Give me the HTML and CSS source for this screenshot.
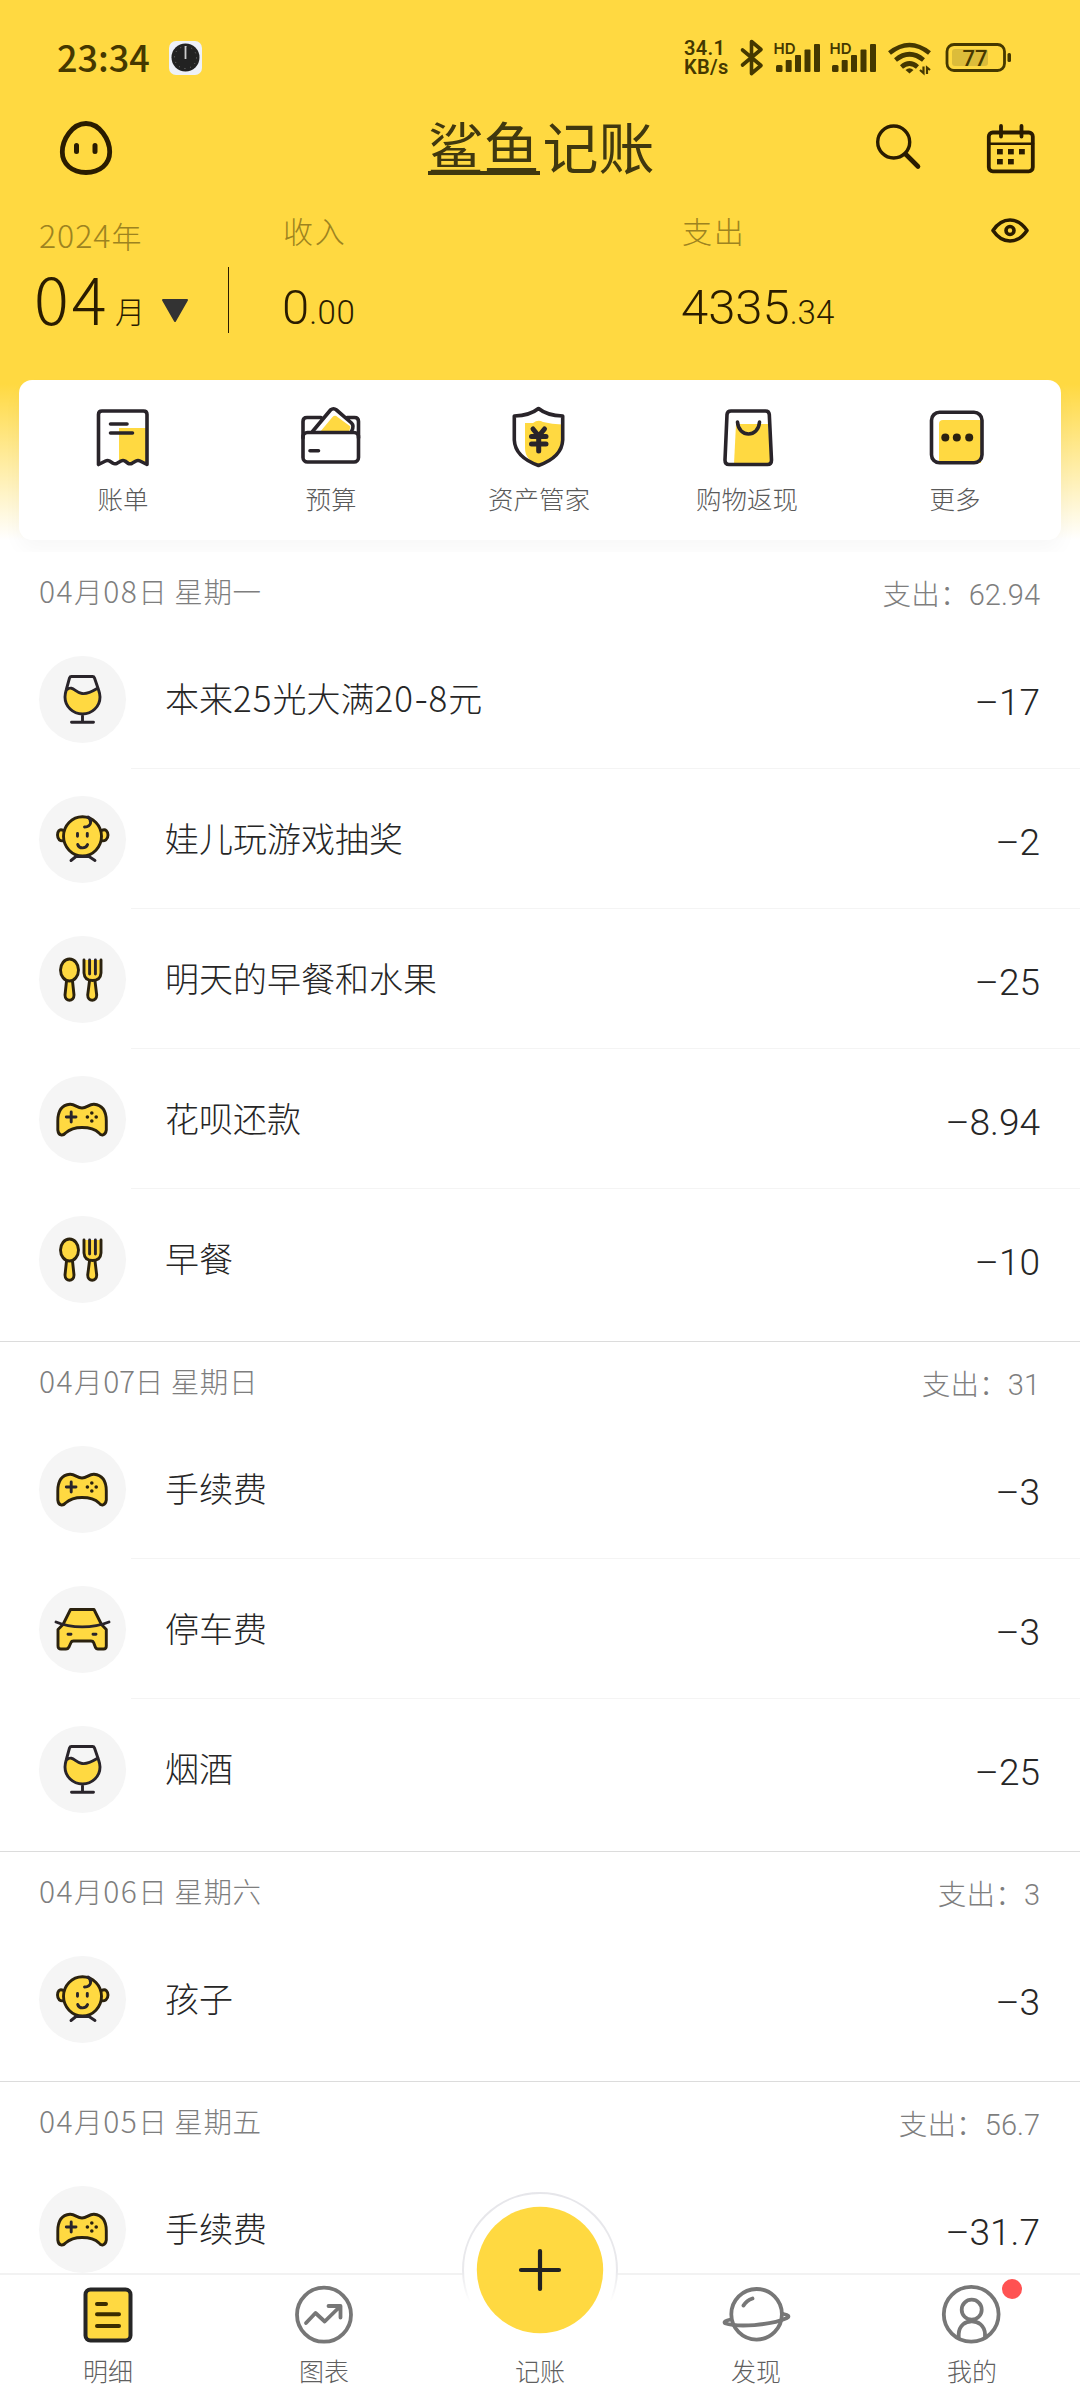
FILE: index.html
```html
<!DOCTYPE html>
<html lang="zh-CN">
<head>
<meta charset="utf-8">
<title>鲨鱼记账</title>
<link rel="stylesheet" href="styles.css">
</head>
<body>
<svg class="sprite" aria-hidden="true">
  <symbol id="i-glass" viewBox="0 0 86 86">
    <path class="y" d="M27.500 34C32 29 37 37 42 37.500C49 38.500 54 35 59.500 32.500L61 41A17.500 17 0 0 1 26 41Z"/>
    <path class="k" d="M32.500 20.500H53.500q1.500 0 2 1.500L59.600 34Q61 38 61 41A17.500 17 0 0 1 26 41Q26 38 27.200 34L30.500 22q.5-1.500 2-1.500zM27.500 34C34 28.500 36 37 43 37.500C49 38.500 54 35 59 32M43.500 58V66.300M32.500 66.300H54.500"/>
  </symbol>
  <symbol id="i-baby" viewBox="0 0 86 86">
    <path class="k yf" d="M24.500 34.500C20 32 18.500 36 18.500 39C18.500 43 21 46 25.500 44.500M62.500 34.500C67 32 69 36 69 39C69 43 66 46 61.500 44.500"/>
    <ellipse class="k yf" cx="43.500" cy="40.300" rx="19" ry="19.600"/>
    <path class="k" d="M32 64.500L37 60.500H50L56 64.500M49 21C53 24 53 30.500 45.500 31M38.500 37.500v2.800M48.300 37.500v2.800M38.700 48.500C40 53 47 53 48.600 48.500"/>
  </symbol>
  <symbol id="i-food" viewBox="0 0 86 86">
    <path class="k yf" d="M27.500 45L26 59C26 66 35 66 35 59L33.500 45"/>
    <ellipse class="k yf" cx="30.500" cy="34" rx="9" ry="11"/>
    <path class="k yf" d="M50.500 45L48.700 59C48.700 66 57.700 66 57.700 59L56 45"/>
    <path class="k yf" d="M45 24V37Q45.500 44.500 53.500 44.500Q61.500 44.500 62 37V24"/>
    <path class="k" d="M50.600 24V38M56.400 24V38"/>
  </symbol>
  <symbol id="i-game" viewBox="0 0 86 86">
    <path class="k yf" d="M31 28.300C36 28 38 32 43 32C48 32 50 28 55 28.300C62 29 67.300 34 67.300 45V54C66.500 60 62 60 60 57C56 53 51 51.500 43 51.500C35 51.500 31 53 26.500 57C24 60 19.500 60 18.800 54V45C18.800 34 23.500 29 31 28.300Z"/>
    <path class="k" d="M27.300 41H37M32.200 36V46"/>
    <g class="d"><circle cx="52.800" cy="37" r="1.800"/><circle cx="52.800" cy="45" r="1.800"/><circle cx="48.400" cy="41" r="1.800"/><circle cx="57.200" cy="41" r="1.800"/></g>
  </symbol>
  <symbol id="i-car" viewBox="0 0 86 86">
    <path class="k yf" d="M31.500 23.500H55L62.500 38.500L67.300 43.500V60Q67.300 63 64.500 63H59Q57 63 56.300 61L54.600 56.500Q54 55 52 55H34.500Q32.500 55 32 56.500L30 61Q29 63 27 63H22Q19 63 19 60V43.500L24 38.500Z"/>
    <path class="k" d="M17 36C32 42.500 54 42.500 70 36M29 48.300H32M54 48.300H57"/>
  </symbol>
</svg>

<div class="app">
  <header class="head">
    <div class="status">
      <div class="status-left">
        <span class="clock">23:34</span>
        <svg width="36" height="36" viewBox="0 0 36 36"><rect x="1" y="1" width="33" height="34" rx="7" fill="#eef1f8"/><circle cx="17.500" cy="17.500" r="14" fill="#222"/><circle cx="17.500" cy="17.500" r="11" fill="none" stroke="#777" stroke-width="1" stroke-dasharray="1 4.760"/><path d="M17.500 6V19" stroke="#ccc" stroke-width="1.800"/></svg>
      </div>
      <div class="status-right">
        <div class="speed"><span>34.1</span><span>KB/s</span></div>
        <svg class="s-icons" width="330" height="44" viewBox="736 36 330 44">
          <path d="M742.500 50L761 65.500L751.500 73.500V41.500L761 49.500L742.500 65" fill="none" stroke="#453800" stroke-width="3.600" stroke-linejoin="round" stroke-linecap="round"/>
          <g id="sig" fill="#453800">
            <rect x="776" y="65" width="6.500" height="7" rx="1.500"/><rect x="785.700" y="60" width="6" height="12" rx="1"/><rect x="795" y="55" width="6" height="17" rx="1"/><rect x="804.500" y="49.500" width="6" height="22.500" rx="1"/><rect x="814" y="44" width="6" height="28" rx="1"/>
          </g>
          <use href="#sig" x="56"/>
          <text class="hd" x="773.500" y="54">HD</text><text class="hd" x="829.500" y="54">HD</text>
          <g fill="none" stroke="#453800" stroke-width="4.600"><path d="M889.500 53Q909.500 37 929.500 53M895.500 60Q909.500 48.500 923.500 60M901.500 67Q909.500 60 917.500 67"/></g>
          <path d="M905.500 70Q909.500 66.500 913.500 70L909.500 73.500Z" fill="#453800"/>
          <path d="M923.500 66.500V73L920 70M927 74V67.500L930 70" fill="none" stroke="#453800" stroke-width="2.200"/>
          <rect x="947" y="44.500" width="57.500" height="26" rx="7" fill="none" stroke="#453800" stroke-width="2.800"/>
          <rect x="952" y="49" width="36" height="17" rx="3" fill="#dcbc3a"/>
          <rect x="1007.500" y="53" width="3.500" height="9" rx="1.500" fill="#453800"/>
          <text class="pct" x="975" y="65.500">77</text>
        </svg>
      </div>
    </div>

    <div class="titlebar">
      <svg class="face" width="60" height="60" viewBox="56 118 60 60"><path d="M86 123.500C100 123.500 109.700 140 109.700 152C109.700 164 100 172.500 86 172.500C72 172.500 62.300 164 62.300 152C62.300 140 72 123.500 86 123.500Z" fill="none" stroke="#2a1c00" stroke-width="4.800"/><path d="M76.500 145.500V151.500M95 145.500V151.500" stroke="#2a1c00" stroke-width="5" stroke-linecap="round"/></svg>
      <h1 class="logo"><span class="logo-u">鲨鱼</span><span>记账</span></h1>
      <div class="actions">
        <svg width="54" height="54" viewBox="870 120 54 54" fill="none" stroke="#2a1c00" stroke-linecap="round"><circle cx="893.700" cy="141" r="16" stroke-width="3.400"/><path d="M906 153.500L918 165.500" stroke-width="4.600"/></svg>
        <svg width="54" height="54" viewBox="984 119 54 54" fill="none" stroke="#2a1c00" stroke-width="3.800" stroke-linecap="round"><rect x="988.800" y="130.500" width="44" height="38.800" rx="4"/><path d="M989 141.700H1033" stroke-width="2.600"/><path d="M1001 124V134.500M1021.500 124V134.500"/><g fill="#2a1c00" stroke="none"><rect x="997" y="147" width="5.800" height="5.400"/><rect x="1008" y="147" width="5.800" height="5.400"/><rect x="1019" y="147" width="5.800" height="5.400"/><rect x="997" y="157" width="5.800" height="5.400"/><rect x="1008" y="157" width="5.800" height="5.400"/></g></svg>
      </div>
    </div>

    <div class="summary">
      <div class="month">
        <div class="cap year"><span class="yy">2024</span>年</div>
        <div class="month-row"><span class="mm">04</span><span class="yue">月</span><svg width="28" height="24" viewBox="0 0 28 24"><path d="M2 1H26L14 22Z" fill="#333" stroke="#333" stroke-width="2" stroke-linejoin="round"/></svg></div>
      </div>
      <div class="rule"></div>
      <div class="sum income"><div class="cap">收入</div><div class="amt">0<small>.00</small></div></div>
      <div class="sum"><div class="cap">支出</div><div class="amt">4335<small>.34</small></div></div>
      <svg class="eye" width="42" height="30" viewBox="989 215 42 30" fill="none" stroke="#2a1c00" stroke-width="3.600"><path d="M993 230.500Q1000 220 1010 220Q1020 220 1027 230.500Q1020 241 1010 241Q1000 241 993 230.500Z" stroke-linejoin="round"/><circle cx="1010" cy="230.500" r="4"/></svg>
    </div>
  </header>

  <nav class="tools">
    <a class="tool"><svg viewBox="93 400 60 72" width="60" height="72"><path class="y" d="M119 428H147V463L138 460L130 463.500L123 460L119 461Z"/><path class="k2" d="M98.500 464.500V414.500q0-3.500 3.500-3.500h41.500q3.500 0 3.500 3.500V464.500Q142 462 140 461Q138 460 136 461L132 463.300Q130 464.300 128 463.300L125 461Q123 460 121 461L117 463.300Q114.700 464.300 113 463.300L109.500 461Q107.500 460 105.500 461ZM110.500 424H127M110.500 433H132.500"/></svg><span>账单</span></a>
    <a class="tool"><svg viewBox="301 400 60 72" width="60" height="72"><path class="y" d="M320 432L332.500 417Q335 414.500 337.500 417L350.500 426.500L349 432Z"/><rect class="k2" x="303" y="432.500" width="55.500" height="29.500" rx="4.500"/><path class="k2" d="M303 438V421.500Q303 417.500 307 417.500H321M347 417.500H354.500Q358.500 417.500 358.500 421.500V438M312.500 431.500L330.500 410Q333.500 407.500 336.500 410L351.500 423Q354.500 426 351.500 431.500M310 450.700H318.500"/></svg><span>预算</span></a>
    <a class="tool"><svg viewBox="509 400 60 72" width="60" height="72"><path class="y" d="M525 423H533Q538 419 543 422Q552 424 562 424.500V440Q561 458 538.500 465.500Q525 460 525 448Z"/><path class="k2" d="M538.500 408.500Q530 415.500 514.300 416V440Q515 457 538.500 465.500Q562 457 562.700 440V416Q547 415.500 538.500 408.500Z"/><path class="k2 fat" d="M533 429L538.700 436L544.500 429M538.700 437V451M531.500 436.500H546M531.500 444H546"/></svg><span>资产管家</span></a>
    <a class="tool"><svg viewBox="717 400 60 72" width="60" height="72"><path class="y" d="M736 424H768L771 464H734Z"/><path class="k2" d="M731 411H765.500Q769 411 769.300 414.500L771.500 460Q771.500 464.500 767.500 464.500H729Q725 464.500 725 460L727 414.500Q727.300 411 731 411ZM737.500 422C738.500 438 758.500 438 759.500 422"/></svg><span>购物返现</span></a>
    <a class="tool"><svg viewBox="925 400 60 72" width="60" height="72"><path class="y" d="M939 424Q939 420 943 420H981V463H939Z"/><rect class="k2" x="931.500" y="412.300" width="50.500" height="50.500" rx="8"/><g class="d"><circle cx="945.300" cy="437.500" r="4"/><circle cx="956.800" cy="437.500" r="4"/><circle cx="969.200" cy="437.500" r="4"/></g></svg><span>更多</span></a>
  </nav>

  <main class="list">
    <section class="day">
      <div class="day-head"><span class="date"><i>04</i>月<i>08</i>日 星期一</span><span class="total">支出：<b>62.94</b></span></div>
      <div class="item"><span class="ic"><svg><use href="#i-glass"/></svg></span><div class="body"><span class="name">本来<i>25</i>光大满<i>20<u>-</u>8</i>元</span><span class="num">–17</span></div></div>
      <div class="item"><span class="ic"><svg><use href="#i-baby"/></svg></span><div class="body"><span class="name">娃儿玩游戏抽奖</span><span class="num">–2</span></div></div>
      <div class="item"><span class="ic"><svg><use href="#i-food"/></svg></span><div class="body"><span class="name">明天的早餐和水果</span><span class="num">–25</span></div></div>
      <div class="item"><span class="ic"><svg><use href="#i-game"/></svg></span><div class="body"><span class="name">花呗还款</span><span class="num">–8.94</span></div></div>
      <div class="item"><span class="ic"><svg><use href="#i-food"/></svg></span><div class="body"><span class="name">早餐</span><span class="num">–10</span></div></div>
    </section>
    <section class="day">
      <div class="day-head"><span class="date"><i>04</i>月<i class="n7">07</i>日 星期日</span><span class="total">支出：<b>31</b></span></div>
      <div class="item"><span class="ic"><svg><use href="#i-game"/></svg></span><div class="body"><span class="name">手续费</span><span class="num">–3</span></div></div>
      <div class="item"><span class="ic"><svg><use href="#i-car"/></svg></span><div class="body"><span class="name">停车费</span><span class="num">–3</span></div></div>
      <div class="item"><span class="ic"><svg><use href="#i-glass"/></svg></span><div class="body"><span class="name">烟酒</span><span class="num">–25</span></div></div>
    </section>
    <section class="day">
      <div class="day-head"><span class="date"><i>04</i>月<i>06</i>日 星期六</span><span class="total">支出：<b>3</b></span></div>
      <div class="item"><span class="ic"><svg><use href="#i-baby"/></svg></span><div class="body"><span class="name">孩子</span><span class="num">–3</span></div></div>
    </section>
    <section class="day">
      <div class="day-head"><span class="date"><i>04</i>月<i>05</i>日 星期五</span><span class="total">支出：<b>56.7</b></span></div>
      <div class="item"><span class="ic"><svg><use href="#i-game"/></svg></span><div class="body"><span class="name">手续费</span><span class="num">–31.7</span></div></div>
    </section>
  </main>

  <nav class="tabs">
    <a class="tab"><svg viewBox="73 2284 70 62" width="70" height="62"><rect x="85.500" y="2289.500" width="45" height="51" rx="5" fill="#ffd941" stroke="#262626" stroke-width="4"/><path d="M97 2304H106M97 2314.300H119M97 2326H119" stroke="#3a2d00" stroke-width="4" stroke-linecap="round"/></svg><span>明细</span></a>
    <a class="tab gray"><svg viewBox="289 2284 70 62" width="70" height="62"><circle cx="324" cy="2314.700" r="27"/><path d="M306 2323L315.500 2313L324.700 2321.500L340 2306.500M328.500 2306H340.500V2317.500"/></svg><span>图表</span></a>
    <a class="tab"><svg class="fab" viewBox="460 2190 160 160" width="160" height="160"><defs><linearGradient id="ring" gradientUnits="userSpaceOnUse" x1="0" y1="2192" x2="0" y2="2302"><stop offset="0" stop-color="#e6e6ea"/><stop offset=".72" stop-color="#e9e9ec"/><stop offset="1" stop-color="#fff"/></linearGradient></defs><circle cx="540" cy="2270" r="77" fill="#fff" stroke="url(#ring)" stroke-width="2"/><circle cx="540" cy="2270" r="63.200" fill="#ffd941"/><path d="M521 2270H559M540 2251V2289" stroke="#222" stroke-width="4.200" stroke-linecap="round"/></svg><span>记账</span></a>
    <a class="tab gray"><svg viewBox="721 2284 70 62" width="70" height="62"><circle cx="756.600" cy="2314.300" r="25.300"/><path d="M730.500 2319.500Q723 2321 725 2323.300C738 2327.500 770 2325.500 787 2318Q791 2315.500 783.500 2314M743.500 2305.500Q746.500 2300.500 752.500 2298.500"/></svg><span>发现</span></a>
    <a class="tab gray"><svg viewBox="937 2284 70 62" width="70" height="62"><circle cx="971.200" cy="2314.300" r="27.400"/><circle cx="971.700" cy="2309.700" r="10"/><path d="M958.700 2337.500V2334C959.500 2317 984 2317 985 2334V2337.500"/></svg><i class="dot"></i><span>我的</span></a>
  </nav>
</div>
</body>
</html>
```
FILE: styles.css
```css
* { box-sizing: border-box; }
body { margin: 0; background: #fff; font-family: "Noto Sans CJK SC", sans-serif; font-weight: 300; }
h1 { margin: 0; font-weight: inherit; }
i { font-style: normal; }
u { text-decoration: none; }
.sprite { position: absolute; width: 0; height: 0; }
svg { display: block; flex: none; }

.y { fill: #ffd941; }
.k, .k2 { fill: none; stroke: #29242a; stroke-width: 2.900; stroke-linecap: round; stroke-linejoin: round; }
.k.yf { fill: #ffd941; stroke: #2b220f; }
.k2 { stroke-width: 3.600; }
.k2.fat { stroke-width: 5; }
.d { fill: #2b220f; }

.app { position: relative; width: 1080px; height: 2400px; overflow: hidden; background: linear-gradient(#ffd941 0, #ffd941 384px, #fff 540px); }

.head { height: 380px; display: flex; flex-direction: column; }
.status { height: 114px; padding: 0 14px 0 57px; display: flex; justify-content: space-between; align-items: center; color: #453800; }
.status-left, .status-right { display: flex; align-items: center; }
.status-left { gap: 17px; padding-top: 2px; }
.clock { font-size: 36px; font-weight: 500; line-height: 36px; width: 94px; white-space: nowrap; padding-bottom: 4px; }
.status-right { gap: 2px; padding-top: 2px; }
.speed { font: 600 20px/19px Roboto, sans-serif; width: 50px; white-space: nowrap; display: flex; flex-direction: column; letter-spacing: .3px; }
.hd { font: 600 15px Inter, sans-serif; fill: #453800; }
.pct { font: 500 22px Roboto, sans-serif; fill: #453800; text-anchor: middle; }

.titlebar { height: 68px; padding: 0 42px 0 56px; display: grid; grid-template-columns: 168px 1fr 168px; align-items: center; }
.logo { display: flex; justify-content: center; font-size: 56px; line-height: 48px; height: 54px; font-weight: 400; color: #40380f; gap: 3px; padding-right: 12px; }
.logo-u { border-bottom: 4px solid #40380f; height: 54px; }
.actions { display: flex; justify-content: space-between; }

.summary { height: 160px; padding-left: 39px; display: grid; grid-template-columns: 189px 1px 54px 399px 305px 1fr; align-items: start; }
.cap { font-size: 30px; line-height: 40px; color: #9d8320; letter-spacing: 1.800px; padding-top: 28px; }
.year { padding-top: 32px; letter-spacing: 0; height: 73px; }
.yy { font-size: 32px; letter-spacing: 1px; }
.month-row { display: flex; align-items: flex-end; height: 75px; color: #2a1c00; }
.mm { font-size: 65px; line-height: 66px; margin-left: -5px; width: 81px; letter-spacing: 3px; }
.yue { font-size: 30px; line-height: 36px; width: 46px; padding-bottom: 2px; }
.month-row svg { margin-bottom: 7px; }
.rule { height: 66px; background: #2a1c00; margin-top: 85px; }
.income { grid-column: 4; }
.amt { font: 300 49px/60px Roboto, sans-serif; color: #2a1c00; padding-top: 28px; margin-left: -1px; }
.amt small { font-size: 33px; }
.income small { letter-spacing: .5px; }
.eye { margin: 33px 0 0 2px; }

.tools { height: 160px; margin: 0 19px; padding-right: 2px; display: grid; grid-template-columns: repeat(5, 1fr); background: #fff; border-radius: 13px; box-shadow: 0 10px 20px rgba(0,0,0,.03); }
.tool { display: flex; flex-direction: column; align-items: center; padding-top: 20px; }
.tool span { margin-top: 6px; font-size: 25.500px; line-height: 40px; color: #5a5a5a; }

.list { background: #fff; margin-top: 12px; }
.day { padding-bottom: 12px; border-bottom: 1px solid #dcdcdc; }
.day-head { height: 77px; padding: 0 40px 0 39px; display: flex; justify-content: space-between; align-items: center; color: #7e7e7e; }
.date { font-size: 28.500px; letter-spacing: .6px; }
.date i { font-size: 30px; letter-spacing: 1.500px; line-height: 1; }
.date .n7 { letter-spacing: -.3px; }
.total { font-size: 28.500px; padding-top: 4px; letter-spacing: .2px; }
.total b { font: 300 29px Roboto, sans-serif; letter-spacing: 0; }
.item { height: 140px; padding-left: 39px; display: flex; align-items: center; }
.ic { width: 87px; height: 87px; border-radius: 50%; background: #f5f5f5; }
.ic svg { width: 86px; height: 86px; margin-left: 0; }
.body { flex: 1; height: 140px; margin-left: 5px; padding: 0 40px 0 34px; display: flex; justify-content: space-between; align-items: center; border-bottom: 1px solid #f4f4f4; color: #262626; }
.item:last-child .body { border-color: transparent; }
.name { font-size: 34px; padding-bottom: 3px; }
.name i { letter-spacing: 1px; font-size: 35px; line-height: 1; }
.name u { font-family: Inter, sans-serif; font-size: 32px; letter-spacing: 0; }
.num { font: 300 37px Roboto, sans-serif; padding-top: 8px; }

.tabs { position: absolute; left: 0; bottom: 0; width: 1080px; height: 127px; background: #fff; border-top: 2px solid #f2f2f2; display: grid; grid-template-columns: repeat(5, 1fr); }
.tab { position: relative; display: flex; flex-direction: column; align-items: center; justify-content: flex-end; padding-bottom: 10px; }
.tab span { position: relative; font-size: 25px; line-height: 40px; margin-top: 4px; color: #5f5f5f; }
.gray svg { fill: none; stroke: #777; stroke-width: 3.800; stroke-linecap: round; stroke-linejoin: round; }
.fab { position: absolute; left: 28px; top: -85px; }
.dot { position: absolute; left: 138px; top: 4px; width: 20px; height: 20px; border-radius: 50%; background: #ff5252; }
```
